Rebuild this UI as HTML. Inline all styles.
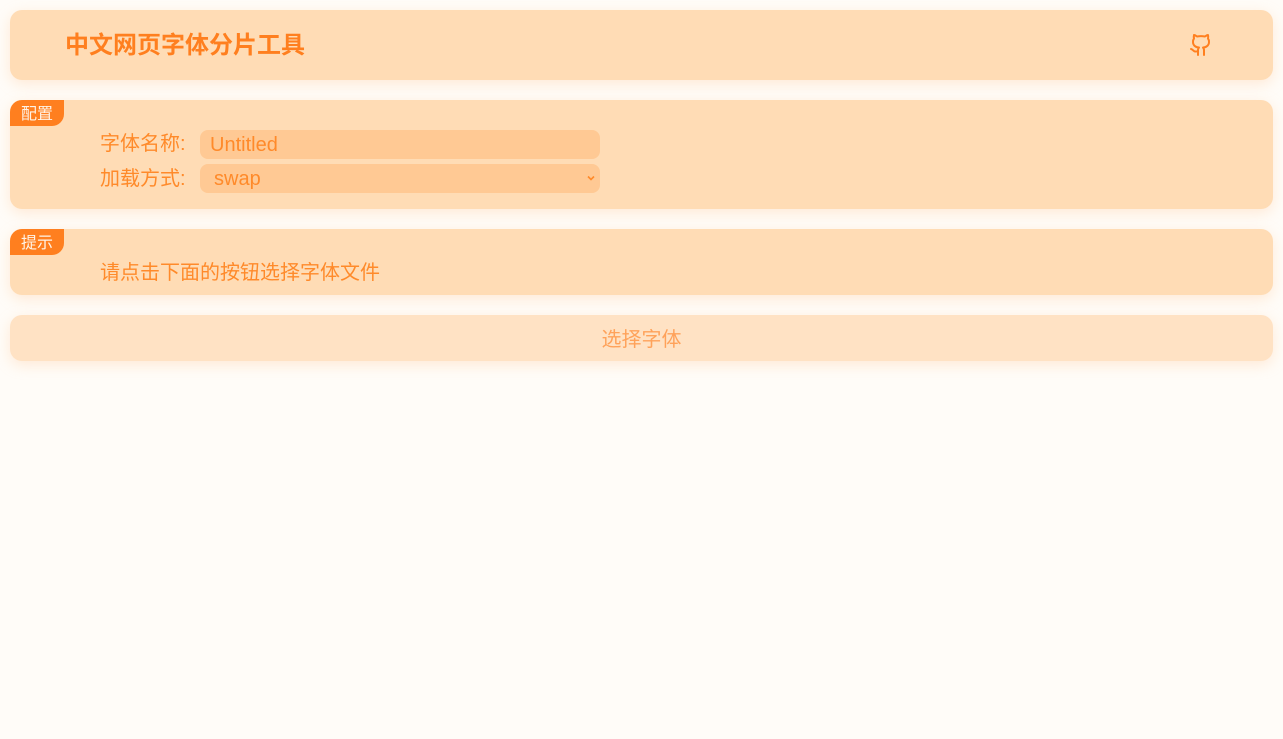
<!DOCTYPE html>
<html><head><meta charset="utf-8"><style>
html,body{margin:0;padding:0;}
body{width:1283px;height:739px;background:#fffcf8;font-family:"Liberation Sans","Noto Sans CJK SC",sans-serif;color:#ff8a2a;position:relative;overflow:hidden;}
.card{position:absolute;left:10px;width:1263px;background:#ffdcb5;border-radius:12px;box-shadow:0 4px 14px rgba(255,200,150,0.35);}
.badge{position:absolute;left:0;top:0;width:54px;height:26px;background:#ff7f1f;color:#fff3e6;font-size:16px;line-height:29px;text-align:center;border-radius:0 0 12px 0;border-top-left-radius:12px;}
.row{position:absolute;left:90px;font-size:20px;height:29px;line-height:31px;}
.field{position:absolute;left:190px;width:400px;height:29px;background:#ffc994;border-radius:8px;font-size:20px;line-height:30px;}
</style></head><body>
<div class="card" style="top:10px;height:70px;">
  <div style="position:absolute;left:55px;top:20px;font-size:24px;font-weight:bold;color:#ff7f1f;line-height:32px;">中文网页字体分片工具</div>
  <svg style="position:absolute;left:1179px;top:23px" width="24" height="24" viewBox="0 0 24 24" fill="none" stroke="#ff7f1f" stroke-width="2" stroke-linecap="round" stroke-linejoin="round"><path d="M15 22v-4a4.8 4.8 0 0 0-1-3.5c3 0 6-2 6-5.5.08-1.25-.27-2.48-1-3.5.28-1.15.28-2.35 0-3.5 0 0-1 0-3 1.5-2.64-.5-5.36-.5-8 0C6 2 5 2 5 2c-.3 1.15-.3 2.35 0 3.5A5.4 5.4 0 0 0 4 9c0 3.5 3 5.5 6 5.5-.39.49-.68 1.05-.85 1.65-.17.6-.22 1.23-.15 1.85v4"/><path d="M9 18c-4.51 2-5-2-7-2"/></svg>
</div>
<div class="card" style="top:100px;height:109px;">
  <div class="badge">配置</div>
  <div class="row" style="top:29px;">字体名称:</div>
  <div class="field" style="top:30px;padding-left:10px;box-sizing:border-box;">Untitled</div>
  <div class="row" style="top:64px;">加载方式:</div>
  <div class="field" style="top:64px;padding-left:14px;box-sizing:border-box;">swap<svg style="position:absolute;right:5px;top:11px" width="8" height="6" viewBox="0 0 8 6"><path d="M1 1.5L4 4.5L7 1.5" fill="none" stroke="#ff8a2a" stroke-width="1.6"/></svg></div>
</div>
<div class="card" style="top:229px;height:66px;">
  <div class="badge">提示</div>
  <div class="row" style="top:29px;">请点击下面的按钮选择字体文件</div>
</div>
<div class="card" style="top:315px;height:46px;background:#ffe2c4;">
  <div style="text-align:center;font-size:20px;line-height:50px;color:#ffa25a;">选择字体</div>
</div>
</body></html>
